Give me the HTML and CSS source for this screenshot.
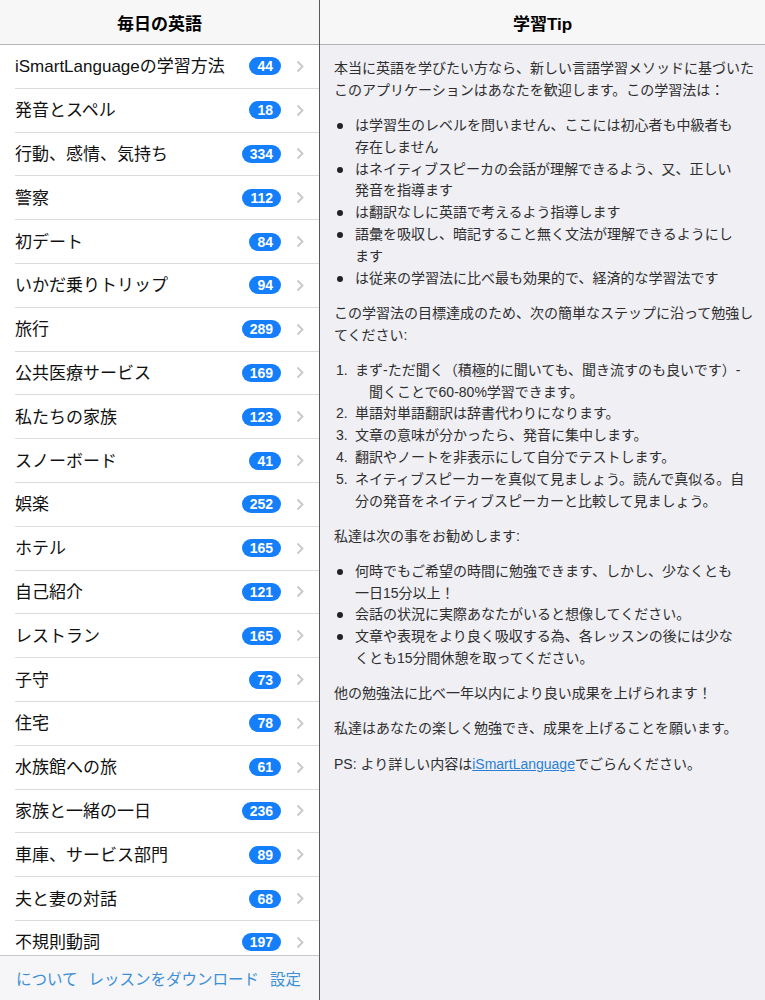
FILE: index.html
```html
<!DOCTYPE html>
<html lang="ja">
<head>
    <meta charset="UTF-8">
    <meta name="viewport" content="width=device-width, initial-scale=1.0">
    <title>毎日の英語</title>
    <link rel="stylesheet" href="styles.css">
</head>
<body>
    <div class="split">
        <!-- Левая колонка: список уроков -->
        <div class="master">
            <div class="navbar"><h1>毎日の英語</h1></div>

            <ul class="lessons">
                <li class="lesson"><div class="lesson-inner"><span class="lesson-name">iSmartLanguageの学習方法</span><span class="badge">44</span><svg class="chevron" viewBox="0 0 8 13"><polyline points="1.5,1.5 6.5,6.5 1.5,11.5"/></svg></div></li>
                <li class="lesson"><div class="lesson-inner"><span class="lesson-name">発音とスペル</span><span class="badge">18</span><svg class="chevron" viewBox="0 0 8 13"><polyline points="1.5,1.5 6.5,6.5 1.5,11.5"/></svg></div></li>
                <li class="lesson"><div class="lesson-inner"><span class="lesson-name">行動、感情、気持ち</span><span class="badge">334</span><svg class="chevron" viewBox="0 0 8 13"><polyline points="1.5,1.5 6.5,6.5 1.5,11.5"/></svg></div></li>
                <li class="lesson"><div class="lesson-inner"><span class="lesson-name">警察</span><span class="badge">112</span><svg class="chevron" viewBox="0 0 8 13"><polyline points="1.5,1.5 6.5,6.5 1.5,11.5"/></svg></div></li>
                <li class="lesson"><div class="lesson-inner"><span class="lesson-name">初デート</span><span class="badge">84</span><svg class="chevron" viewBox="0 0 8 13"><polyline points="1.5,1.5 6.5,6.5 1.5,11.5"/></svg></div></li>
                <li class="lesson"><div class="lesson-inner"><span class="lesson-name">いかだ乗りトリップ</span><span class="badge">94</span><svg class="chevron" viewBox="0 0 8 13"><polyline points="1.5,1.5 6.5,6.5 1.5,11.5"/></svg></div></li>
                <li class="lesson"><div class="lesson-inner"><span class="lesson-name">旅行</span><span class="badge">289</span><svg class="chevron" viewBox="0 0 8 13"><polyline points="1.5,1.5 6.5,6.5 1.5,11.5"/></svg></div></li>
                <li class="lesson"><div class="lesson-inner"><span class="lesson-name">公共医療サービス</span><span class="badge">169</span><svg class="chevron" viewBox="0 0 8 13"><polyline points="1.5,1.5 6.5,6.5 1.5,11.5"/></svg></div></li>
                <li class="lesson"><div class="lesson-inner"><span class="lesson-name">私たちの家族</span><span class="badge">123</span><svg class="chevron" viewBox="0 0 8 13"><polyline points="1.5,1.5 6.5,6.5 1.5,11.5"/></svg></div></li>
                <li class="lesson"><div class="lesson-inner"><span class="lesson-name">スノーボード</span><span class="badge">41</span><svg class="chevron" viewBox="0 0 8 13"><polyline points="1.5,1.5 6.5,6.5 1.5,11.5"/></svg></div></li>
                <li class="lesson"><div class="lesson-inner"><span class="lesson-name">娯楽</span><span class="badge">252</span><svg class="chevron" viewBox="0 0 8 13"><polyline points="1.5,1.5 6.5,6.5 1.5,11.5"/></svg></div></li>
                <li class="lesson"><div class="lesson-inner"><span class="lesson-name">ホテル</span><span class="badge">165</span><svg class="chevron" viewBox="0 0 8 13"><polyline points="1.5,1.5 6.5,6.5 1.5,11.5"/></svg></div></li>
                <li class="lesson"><div class="lesson-inner"><span class="lesson-name">自己紹介</span><span class="badge">121</span><svg class="chevron" viewBox="0 0 8 13"><polyline points="1.5,1.5 6.5,6.5 1.5,11.5"/></svg></div></li>
                <li class="lesson"><div class="lesson-inner"><span class="lesson-name">レストラン</span><span class="badge">165</span><svg class="chevron" viewBox="0 0 8 13"><polyline points="1.5,1.5 6.5,6.5 1.5,11.5"/></svg></div></li>
                <li class="lesson"><div class="lesson-inner"><span class="lesson-name">子守</span><span class="badge">73</span><svg class="chevron" viewBox="0 0 8 13"><polyline points="1.5,1.5 6.5,6.5 1.5,11.5"/></svg></div></li>
                <li class="lesson"><div class="lesson-inner"><span class="lesson-name">住宅</span><span class="badge">78</span><svg class="chevron" viewBox="0 0 8 13"><polyline points="1.5,1.5 6.5,6.5 1.5,11.5"/></svg></div></li>
                <li class="lesson"><div class="lesson-inner"><span class="lesson-name">水族館への旅</span><span class="badge">61</span><svg class="chevron" viewBox="0 0 8 13"><polyline points="1.5,1.5 6.5,6.5 1.5,11.5"/></svg></div></li>
                <li class="lesson"><div class="lesson-inner"><span class="lesson-name">家族と一緒の一日</span><span class="badge">236</span><svg class="chevron" viewBox="0 0 8 13"><polyline points="1.5,1.5 6.5,6.5 1.5,11.5"/></svg></div></li>
                <li class="lesson"><div class="lesson-inner"><span class="lesson-name">車庫、サービス部門</span><span class="badge">89</span><svg class="chevron" viewBox="0 0 8 13"><polyline points="1.5,1.5 6.5,6.5 1.5,11.5"/></svg></div></li>
                <li class="lesson"><div class="lesson-inner"><span class="lesson-name">夫と妻の対話</span><span class="badge">68</span><svg class="chevron" viewBox="0 0 8 13"><polyline points="1.5,1.5 6.5,6.5 1.5,11.5"/></svg></div></li>
                <li class="lesson"><div class="lesson-inner"><span class="lesson-name">不規則動詞</span><span class="badge">197</span><svg class="chevron" viewBox="0 0 8 13"><polyline points="1.5,1.5 6.5,6.5 1.5,11.5"/></svg></div></li>
            </ul>

            <div class="toolbar">
                <a href="#">について</a>
                <a href="#">レッスンをダウンロード</a>
                <a href="#">設定</a>
            </div>
        </div>

        <!-- Правая колонка: совет -->
        <div class="detail">
            <div class="navbar"><h1>学習Tip</h1></div>

            <div class="tip">
                <p>本当に英語を学びたい方なら、新しい言語学習メソッドに基づいたこのアプリケーションはあなたを歓迎します。この学習法は：</p>

                <ul class="bullets">
                    <li><span class="dot"></span><span>は学習生のレベルを問いません、ここには初心者も中級者も<br>存在しません</span></li>
                    <li><span class="dot"></span><span>はネイティブスピーカの会話が理解できるよう、又、正しい発音を指導ます</span></li>
                    <li><span class="dot"></span><span>は翻訳なしに英語で考えるよう指導します</span></li>
                    <li><span class="dot"></span><span>語彙を吸収し、暗記すること無く文法が理解できるようにします</span></li>
                    <li><span class="dot"></span><span>は従来の学習法に比べ最も効果的で、経済的な学習法です</span></li>
                </ul>

                <p>この学習法の目標達成のため、次の簡単なステップに沿って勉強してください:</p>

                <ol class="steps">
                    <li><span class="num">1.</span><span>まず-ただ聞く（積極的に聞いても、聞き流すのも良いです）-<br><span class="indent">聞くことで60-80%学習できます。</span></span></li>
                    <li><span class="num">2.</span><span>単語対単語翻訳は辞書代わりになります。</span></li>
                    <li><span class="num">3.</span><span>文章の意味が分かったら、発音に集中します。</span></li>
                    <li><span class="num">4.</span><span>翻訳やノートを非表示にして自分でテストします。</span></li>
                    <li><span class="num">5.</span><span>ネイティブスピーカーを真似て見ましょう。読んで真似る。自分の発音をネイティブスピーカーと比較して見ましょう。</span></li>
                </ol>

                <p>私達は次の事をお勧めします:</p>

                <ul class="bullets">
                    <li><span class="dot"></span><span>何時でもご希望の時間に勉強できます、しかし、少なくとも一日15分以上！</span></li>
                    <li><span class="dot"></span><span>会話の状況に実際あなたがいると想像してください。</span></li>
                    <li><span class="dot"></span><span>文章や表現をより良く吸収する為、各レッスンの後には少なくとも15分間休憩を取ってください。</span></li>
                </ul>

                <p>他の勉強法に比べ一年以内により良い成果を上げられます！</p>

                <p>私達はあなたの楽しく勉強でき、成果を上げることを願います。</p>

                <p>PS: より詳しい内容は<a href="#">iSmartLanguage</a>でごらんください。</p>
            </div>
        </div>
    </div>
</body>
</html>
```

FILE: styles.css
```css
body {
    margin: 0;
    width: 765px;
    height: 1000px;
    overflow: hidden;
    font-family: "Liberation Sans", "Noto Sans CJK JP", sans-serif;
    background-color: #efeff4;
}

.split {
    display: flex;
    height: 1000px;
}

.master {
    width: 319px;
    border-right: 1px solid #5a5a5e;
    background: white;
    display: flex;
    flex-direction: column;
}

.detail {
    flex: 1;
    background-color: #efeff4;
}

.navbar {
    height: 44px;
    border-bottom: 1px solid #b4b4b8;
    background-color: #f7f7f7;
    display: flex;
    align-items: center;
    justify-content: center;
    flex-shrink: 0;
}

.navbar h1 {
    margin: 0;
    font-size: 17px;
    font-weight: bold;
    color: #000;
}

/* Список уроков */
.lessons {
    list-style: none;
    margin: 0;
    padding: 0;
    flex: 1;
    overflow: hidden;
}

.lesson {
    height: 43.8px;
    padding-left: 15px;
}

.lesson-inner {
    height: 100%;
    box-sizing: border-box;
    border-bottom: 1px solid #dcdce0;
    padding-right: 15px;
    display: flex;
    align-items: center;
}

.lesson-name {
    flex: 1;
    font-size: 17px;
    color: #111;
    padding-bottom: 3px;
}

.badge {
    background-color: #147efb;
    color: white;
    font-size: 14px;
    font-weight: bold;
    height: 18px;
    line-height: 18px;
    padding: 0 8px;
    border-radius: 9px;
}

.chevron {
    width: 8px;
    height: 13px;
    margin-left: 15px;
    fill: none;
    stroke: #c7c7cc;
    stroke-width: 1.8;
}

.toolbar {
    height: 44px;
    flex-shrink: 0;
    border-top: 1px solid #c8c8cc;
    background-color: #f6f6f8;
    display: flex;
    align-items: center;
    gap: 11px;
    padding-left: 16px;
}

.toolbar a {
    color: #3d8fd6;
    text-decoration: none;
    font-size: 15.5px;
}

/* Текст совета */
.tip {
    padding: 13px 10px 0 14px;
    font-size: 14px;
    line-height: 21.8px;
    color: #2e2e2e;
}

.tip p {
    margin: 0 0 13.4px;
}

.tip a {
    color: #2a7fd4;
}

.bullets, .steps {
    list-style: none;
    margin: 0 0 13.4px;
    padding: 0;
}

.bullets {
    padding-right: 15px;
}

.bullets li, .steps li {
    display: flex;
}

.dot {
    width: 21px;
    height: 21.8px;
    flex-shrink: 0;
    position: relative;
}

.dot::before {
    content: "";
    position: absolute;
    left: 3px;
    top: 8px;
    width: 6px;
    height: 6px;
    border-radius: 50%;
    background-color: #222;
}

.num {
    width: 19px;
    padding-left: 2px;
    flex-shrink: 0;
}

.indent {
    padding-left: 14px;
}
```
